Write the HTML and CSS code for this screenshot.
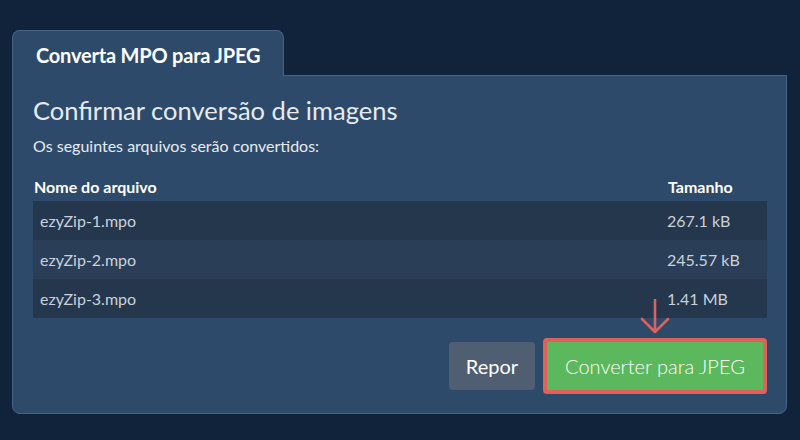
FILE: index.html
```html
<!DOCTYPE html>
<html lang="pt">
<head>
<meta charset="utf-8">
<title>Converta MPO para JPEG</title>
<link rel="stylesheet" href="styles.css">
</head>
<body>
<div class="wrap">
  <div class="tab">Converta MPO para JPEG</div>
  <div class="panel">
    <h1 class="title">Confirmar conversão de imagens</h1>
    <p class="sub">Os seguintes arquivos serão convertidos:</p>
    <div class="table">
      <div class="row head"><span class="name">Nome do arquivo</span><span class="size">Tamanho</span></div>
      <div class="row odd"><span class="name">ezyZip-1.mpo</span><span class="size">267.1 kB</span></div>
      <div class="row even"><span class="name">ezyZip-2.mpo</span><span class="size">245.57 kB</span></div>
      <div class="row odd"><span class="name">ezyZip-3.mpo</span><span class="size">1.41 MB</span></div>
    </div>
    <div class="actions">
      <button class="btn reset">Repor</button>
      <div class="convert-wrap">
        <svg class="arrow" width="30" height="36" viewBox="0 0 30 36">
          <path d="M15 1 V33 M2 20 L15 33 L28 20" fill="none" stroke="#e0605a" stroke-width="2.6" stroke-linecap="round" stroke-linejoin="round"/>
        </svg>
        <button class="btn convert">Converter para JPEG</button>
      </div>
    </div>
  </div>
</div>
</body>
</html>
```
FILE: styles.css
```css
html, body {
  margin: 0;
  padding: 0;
  background: #11233a;
  font-family: Lato, "Open Sans", sans-serif;
}
.wrap {
  padding: 30px 13px 0 12px;
}
.tab {
  position: relative;
  z-index: 1;
  width: 247px;
  height: 42px;
  box-sizing: content-box;
  padding: 3px 0 0 23px;
  display: flex;
  align-items: center;
  background: #2d4a6a;
  border: 1px solid #4a6385;
  border-bottom: none;
  border-radius: 8px 8px 0 0;
  margin-bottom: -1px;
  color: #ffffff;
  font-weight: 700;
  font-size: 20px;
  letter-spacing: -0.2px;
}
.panel {
  background: #2d4a6a;
  border: 1px solid #4a6385;
  border-radius: 0 0 8px 8px;
  padding: 19px 19px 19px 20px;
}
.title {
  margin: 0;
  font-weight: 400;
  font-size: 25.5px;
  line-height: 30px;
  color: #e6ebf1;
}
.sub {
  margin: 11px 0 0;
  font-size: 16px;
  line-height: 20px;
  color: #e6ebf1;
}
.table {
  margin-top: 21px;
}
.row {
  display: flex;
  align-items: center;
  height: 39px;
  font-size: 16px;
  color: #c9d1db;
}
.row.head {
  height: 24px;
  align-items: flex-start;
  font-weight: 700;
  font-size: 16px;
  line-height: 20px;
  color: #ffffff;
}
.row.odd { background: #24374d; }
.row.even { background: #2a3f57; }
.name {
  flex: 1;
  padding-left: 7px;
}
.row.head .name { padding-left: 1px; }
.size {
  width: 100px;
}
.row.head .size { width: 99px; }
.actions {
  display: flex;
  justify-content: flex-end;
  align-items: center;
  gap: 8px;
  margin-top: 20px;
}
.btn {
  font-family: Lato, "Open Sans", sans-serif;
  font-size: 20px;
  color: #ffffff;
  border-radius: 4px;
  cursor: pointer;
}
.reset {
  width: 86px;
  height: 48px;
  border: none;
  background: #4f5e70;
}
.convert-wrap {
  position: relative;
}
.arrow {
  position: absolute;
  left: 50%;
  bottom: 100%;
  margin-left: -15px;
  margin-bottom: 3px;
}
.convert {
  display: block;
  width: 224px;
  height: 56px;
  border: 4px solid #e0605a;
  background: #5cb85c;
  font-weight: 300;
}
```
